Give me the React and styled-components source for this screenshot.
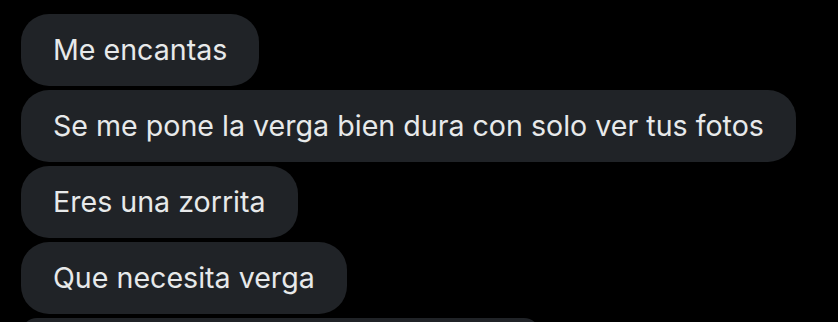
import React from "react";
import styled, { createGlobalStyle } from "styled-components";

const Global = createGlobalStyle`
  html, body { margin: 0; padding: 0; background: #000; }
  body { font-family: Inter, "Noto Sans", "Liberation Sans", sans-serif; }
`;

const Thread = styled.div`
  display: flex;
  flex-direction: column;
  align-items: flex-start;
  gap: 4px;
  padding: 14px 0 0 21px;
  height: 322px;
  box-sizing: border-box;
  overflow: hidden;
`;

const Bubble = styled.div`
  box-sizing: border-box;
  background: #202327;
  color: #e7e9ea;
  border-radius: 28px;
  padding: 16px 32px;
  font-size: 28.6px;
  line-height: 40px;
  height: 72px;
  white-space: nowrap;
  width: ${(p) => (p.$w ? `${p.$w}px` : "auto")};
`;

const messages = [
  "Me encantas",
  "Se me pone la verga bien dura con solo ver tus fotos",
  "Eres una zorrita",
  "Que necesita verga",
];

export default function App() {
  return (
    <>
      <Global />
      <Thread>
        {messages.map((m) => (
          <Bubble key={m}>{m}</Bubble>
        ))}
        <Bubble $w={519} aria-hidden="true" />
      </Thread>
    </>
  );
}
